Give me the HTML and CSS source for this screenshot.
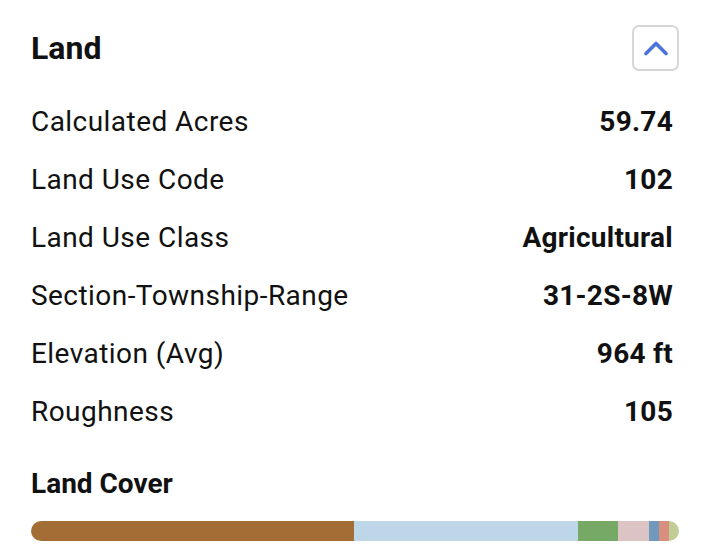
FILE: index.html
```html
<!DOCTYPE html>
<html>
<head>
<meta charset="utf-8">
<link rel="stylesheet" href="styles.css">
</head>
<body>
<div class="panel">
  <div class="header">
    <h2 class="title">Land</h2>
    <button class="toggle" aria-label="Collapse">
      <svg width="26" height="16" viewBox="0 0 26 16"><path d="M3 13.5 L13 3.5 L23 13.5" fill="none" stroke="#4b74da" stroke-width="3.6" stroke-linecap="round" stroke-linejoin="round"/></svg>
    </button>
  </div>
  <div class="rows">
    <div class="row"><span class="label">Calculated Acres</span><span class="value">59.74</span></div>
    <div class="row"><span class="label">Land Use Code</span><span class="value">102</span></div>
    <div class="row"><span class="label">Land Use Class</span><span class="value">Agricultural</span></div>
    <div class="row"><span class="label">Section-Township-Range</span><span class="value">31-2S-8W</span></div>
    <div class="row"><span class="label">Elevation (Avg)</span><span class="value">964 ft</span></div>
    <div class="row"><span class="label">Roughness</span><span class="value">105</span></div>
  </div>
  <h3 class="subtitle">Land Cover</h3>
  <div class="bar">
    <div class="seg c1" style="width:323px"></div>
    <div class="seg c2" style="width:224px"></div>
    <div class="seg c3" style="width:40px"></div>
    <div class="seg c4" style="width:31px"></div>
    <div class="seg c5" style="width:10px"></div>
    <div class="seg c6" style="width:10px"></div>
    <div class="seg c7" style="width:10px"></div>
  </div>
</div>
</body>
</html>
```
FILE: styles.css
```css
html, body { margin: 0; padding: 0; background: #fff; }
body { font-family: Roboto, "Noto Sans", sans-serif; color: #111; }
.panel { padding: 25px 23px 0 31px; }
.header { display: flex; justify-content: space-between; align-items: center; height: 46px; }
.title { margin: 0; font-size: 32px; font-weight: 700; line-height: 46px; }
.toggle { width: 47px; height: 46px; border: 2px solid #d6d6d6; border-radius: 7px; background: #fff; display: flex; align-items: center; justify-content: center; padding: 0; }
.toggle svg { display: block; }
.rows { margin-top: 21px; }
.row { display: flex; justify-content: space-between; align-items: center; height: 58px; padding-right: 6px; }
.label { font-size: 28px; letter-spacing: 0.45px; color: #111; }
.value { font-size: 28px; font-weight: 700; letter-spacing: 0.25px; }
.subtitle { margin: 27px 0 0; font-size: 28px; font-weight: 700; line-height: 33px; }
.bar { display: flex; height: 20px; margin-top: 21px; border-radius: 10px; overflow: hidden; }
.seg { height: 100%; }
.c1 { background: #a36e35; }
.c2 { background: #bdd7e9; }
.c3 { background: #76a866; }
.c4 { background: #ddc4c4; }
.c5 { background: #7099bd; }
.c6 { background: #d98f7e; }
.c7 { background: #c1cd94; }
```
